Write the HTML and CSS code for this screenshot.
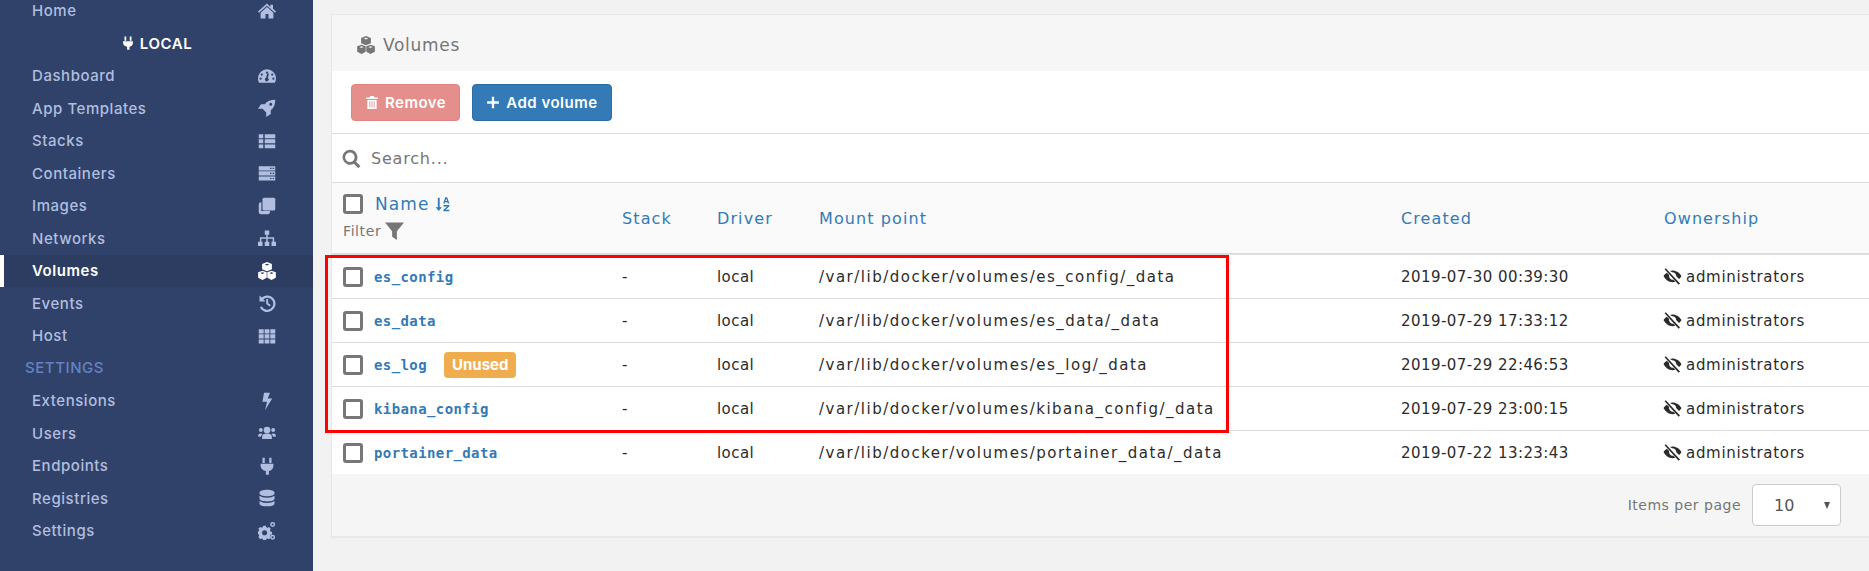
FILE: index.html
```html
<!DOCTYPE html>
<html lang="en">
<head>
  <meta charset="UTF-8">
  <title>Volumes</title>
  <link rel="stylesheet" href="styles.css">
</head>
<body>
  <svg class="sprites" width="0" height="0">
    <symbol id="i-home" viewBox="0 0 24 24"><path d="M12 2 0 12.6l1.4 1.7L12 5l10.600 9.300 1.400-1.700-4-3.500V3.500h-3.500v3.100z"/><path d="M3.500 14.200V22H10v-6h4v6h6.500v-7.800L12 6.800z"/></symbol>
    <symbol id="i-dash" viewBox="0 0 24 24"><path fill-rule="evenodd" d="M12 3A12 12 0 0 0 0 15c0 2.200.6 4.300 1.600 6h20.800c1-1.700 1.600-3.800 1.600-6A12 12 0 0 0 12 3zM5 8.500a1.500 1.500 0 1 1 0 3 1.500 1.500 0 0 1 0-3zM12 6a1.500 1.500 0 1 1 0 3 1.500 1.500 0 0 1 0-3zM3.500 14a1.500 1.500 0 1 1 0 3 1.500 1.500 0 0 1 0-3zM20.500 14a1.500 1.500 0 1 1 0 3 1.500 1.500 0 0 1 0-3zM19 8.500a1.500 1.500 0 1 1 0 3 1.500 1.500 0 0 1 0-3zM14.500 8.500l-1.200 6.100a2.500 2.500 0 1 1-2.500-.3l1.600-6.200z"/></symbol>
    <symbol id="i-rocket" viewBox="0 0 24 24"><path fill-rule="evenodd" d="M23 1c-6 0-10.500 1.500-14 6H4L0 13h6l5 5v6l6-4v-5c4.500-3.500 6-8 6-14zM17 5a2 2 0 1 1 0 4 2 2 0 0 1 0-4z"/></symbol>
    <symbol id="i-list" viewBox="0 0 24 24"><path d="M1 3h6v5.300H1zM9 3h14v5.300H9zM1 9.800h6v5.300H1zM9 9.800h14v5.300H9zM1 16.500h6v5.300H1zM9 16.500h14v5.300H9z"/></symbol>
    <symbol id="i-server" viewBox="0 0 24 24"><path fill-rule="evenodd" d="M1 3h22v5.500H1zM16 5v1.500h2V5zM19.500 5v1.500h2V5zM1 9.800h22v5.400H1zM16 11.700v1.500h2v-1.500zM19.500 11.700v1.500h2v-1.500zM1 16.500h22V22H1zM16 18.500V20h2v-1.500zM19.500 18.500V20h2v-1.500z"/></symbol>
    <symbol id="i-clone" viewBox="0 0 24 24"><path d="M8 1h13a2 2 0 0 1 2 2v13a2 2 0 0 1-2 2H8a2 2 0 0 1-2-2V3a2 2 0 0 1 2-2z"/><path d="M4.500 7v11.500H16V20a3 3 0 0 1-3 3H4a3 3 0 0 1-3-3v-10a3 3 0 0 1 3-3z"/></symbol>
    <symbol id="i-sitemap" viewBox="0 0 24 24"><path d="M9 2h6v5.500h-6zM0 17h6v5.500H0zM9 17h6v5.500H9zM18 17h6v5.500h-6zM11 7.500h2V11h8.500v6h-2v-4H13v4h-2v-4H4.500v4h-2v-6H11z"/></symbol>
    <symbol id="i-cubes" viewBox="0 0 24 24"><path fill-rule="evenodd" d="M12 0l6.500 2.500v7L12 12.300 5.500 9.500v-7zM12 2.200 9 3.300l3 1.300 3-1.300zM6 11.500l5.600 2.300v7.200L6 24 .2 21v-7.200zM6 13.800l-2.700 1L6 16l2.700-1.200zM18 11.500l5.800 2.300v7.200L18 24l-5.600-3v-7.200zM18 13.800l-2.700 1L18 16l2.700-1.200z"/></symbol>
    <symbol id="i-history" viewBox="0 0 24 24"><path d="M2 2v8h8L7 7a8 8 0 1 1-1.800 9.500l-2.800 1.200A11 11 0 1 0 5 4.800z"/><path d="M11 6.500h2.500v5.500l3.500 2.600-1.500 2-4.500-3.400z"/></symbol>
    <symbol id="i-grid" viewBox="0 0 24 24"><path d="M1 3h6.600v5.500H1zM8.800 3h6.400v5.500H8.800zM16.400 3H23v5.500h-6.600zM1 9.800h6.600v5.400H1zM8.800 9.800h6.400v5.400H8.800zM16.400 9.800H23v5.400h-6.600zM1 16.500h6.600V22H1zM8.800 16.500h6.400V22H8.800zM16.400 16.500H23V22h-6.600z"/></symbol>
    <symbol id="i-bolt" viewBox="0 0 24 24"><path d="M8 1h8l-3 7.500h6L9.500 24l2.500-11H6z"/></symbol>
    <symbol id="i-users" viewBox="0 0 24 24"><circle cx="12" cy="8" r="4.500"/><circle cx="3.800" cy="8" r="2.600"/><circle cx="20.200" cy="8" r="2.600"/><path d="M5.500 20v-3c0-2.500 2-4 4-4h5c2 0 4 1.500 4 4v3zM0 16.500c0-2.500 1.500-4 3.500-4 1 0 2 .4 2.700 1-1.400 1-2.200 2-2.400 3.500zM24 16.500c0-2.500-1.500-4-3.500-4-1 0-2 .4-2.700 1 1.400 1 2.200 2 2.400 3.500z"/></symbol>
    <symbol id="i-plug" viewBox="0 0 24 24"><path d="M6 1h3v7H6zM15 1h3v7h-3zM3.500 9h17v2.500c0 3.800-2.500 6.400-6 7v5H10.500v-5c-3.500-.6-7-3.200-7-7z"/></symbol>
    <symbol id="i-db" viewBox="0 0 24 24"><path d="M12 1c5.500 0 10 1.600 10 3.700v1.300c0 2-4.500 3.700-10 3.700S2 8 2 6V4.700C2 2.600 6.500 1 12 1zM2 9c2 1.800 6 2.600 10 2.600S20 10.800 22 9v4c0 2-4.500 3.500-10 3.500S2 15 2 13zM2 16c2 1.800 6 2.600 10 2.600s8-.8 10-2.600v3.500C22 21.500 17.500 23 12 23S2 21.500 2 19.500z"/></symbol>
    <symbol id="i-cogs" viewBox="0 0 24 24"><path fill-rule="evenodd" d="M7 5h3.500l.5 2 1.800.8 1.800-1.100 2.400 2.400-1.100 1.800.8 1.800 2 .5v3.400l-2 .5-.8 1.800 1.100 1.800-2.400 2.400-1.800-1.100-1.800.8-.5 2H7l-.5-2-1.800-.8-1.800 1.100L.5 20l1.100-1.800L.8 16.400 0 16v-3.400l.8-.2.8-1.800L.5 8.800l2.400-2.300 1.800 1.100 1.800-.8zM8.800 11a3.400 3.400 0 1 0 0 6.800 3.400 3.400 0 0 0 0-6.800z"/><path fill-rule="evenodd" d="M19.500 0a3.300 3.300 0 1 1 0 6.600 3.300 3.300 0 0 1 0-6.600zm0 1.900a1.400 1.400 0 1 0 0 2.800 1.400 1.400 0 0 0 0-2.800zM19.500 17a3.300 3.300 0 1 1 0 6.600 3.300 3.300 0 0 1 0-6.600zm0 1.900a1.400 1.400 0 1 0 0 2.800 1.400 1.400 0 0 0 0-2.800z"/></symbol>
    <symbol id="i-trash" viewBox="0 0 24 24"><path fill-rule="evenodd" d="M9 1h6l1 2.500h6V6H2V3.500h6zM4 7.500h16V23H4zM7.500 10v10.500H9V10zM11.300 10v10.500h1.500V10zM15 10v10.500h1.500V10z"/></symbol>
    <symbol id="i-plus" viewBox="0 0 24 24"><path d="M10 2h4v8h8v4h-8v8h-4v-8H2v-4h8z"/></symbol>
    <symbol id="i-search" viewBox="0 0 24 24"><path fill-rule="evenodd" d="M10 1a9.500 9.500 0 0 1 7.700 15l5.600 5.600-2.700 2.700-5.600-5.600A9.500 9.500 0 1 1 10 1zm0 3.500a6 6 0 1 0 0 12 6 6 0 0 0 0-12z"/></symbol>
    <symbol id="i-filter" viewBox="0 0 24 24"><path d="M0 2h24l-9 11v11l-6-4v-7z"/></symbol>
    <symbol id="i-sort" viewBox="0 0 24 24"><path d="M4.500 2h3v15h3.500l-5 6-5-6h3.500zM16.500 1h3l3.500 10h-2.600l-.6-2h-3.700l-.6 2h-2.500zM18 3.500 16.700 7.300h2.600zM13.500 13.500H23v2l-6 5.500h6v2.500h-9.700v-2l6-5.500h-5.800z"/></symbol>
    <symbol id="i-eyeoff" viewBox="0 0 24 24"><path fill-rule="evenodd" d="M3 1.500 22 22l-1.800 1.500L1.500 3zM4.500 7.500l3 3.300a5 5 0 0 0 5.700 6.200l2.600 2.800C9 21.500 3 18 0 12c1-1.800 2.500-3.300 4.500-4.500zM12 4.500c5 0 9.500 3 12 7.500-.8 1.500-2 3-3.300 4L16.900 12a5 5 0 0 0-5.500-5L8.800 5.200c1-.4 2-.7 3.200-.7z"/></symbol>
  </svg>

  <div class="page">
    <nav class="sidebar">
      <a class="nav-item"><span>Home</span><svg class="nav-icon"><use href="#i-home"/></svg></a>
      <div class="nav-endpoint"><svg class="endpoint-icon"><use href="#i-plug"/></svg> LOCAL</div>
      <a class="nav-item"><span>Dashboard</span><svg class="nav-icon"><use href="#i-dash"/></svg></a>
      <a class="nav-item"><span>App Templates</span><svg class="nav-icon"><use href="#i-rocket"/></svg></a>
      <a class="nav-item"><span>Stacks</span><svg class="nav-icon"><use href="#i-list"/></svg></a>
      <a class="nav-item"><span>Containers</span><svg class="nav-icon"><use href="#i-server"/></svg></a>
      <a class="nav-item"><span>Images</span><svg class="nav-icon"><use href="#i-clone"/></svg></a>
      <a class="nav-item"><span>Networks</span><svg class="nav-icon"><use href="#i-sitemap"/></svg></a>
      <a class="nav-item active"><span>Volumes</span><svg class="nav-icon"><use href="#i-cubes"/></svg></a>
      <a class="nav-item"><span>Events</span><svg class="nav-icon"><use href="#i-history"/></svg></a>
      <a class="nav-item"><span>Host</span><svg class="nav-icon"><use href="#i-grid"/></svg></a>
      <div class="nav-title">SETTINGS</div>
      <a class="nav-item"><span>Extensions</span><svg class="nav-icon"><use href="#i-bolt"/></svg></a>
      <a class="nav-item"><span>Users</span><svg class="nav-icon"><use href="#i-users"/></svg></a>
      <a class="nav-item"><span>Endpoints</span><svg class="nav-icon"><use href="#i-plug"/></svg></a>
      <a class="nav-item"><span>Registries</span><svg class="nav-icon"><use href="#i-db"/></svg></a>
      <a class="nav-item"><span>Settings</span><svg class="nav-icon"><use href="#i-cogs"/></svg></a>
    </nav>

    <main class="content">
      <section class="widget">
        <header class="widget-title"><svg class="title-icon"><use href="#i-cubes"/></svg>Volumes</header>

        <div class="toolbar">
          <button class="btn btn-remove"><svg class="btn-icon"><use href="#i-trash"/></svg>Remove</button>
          <button class="btn btn-add"><svg class="btn-icon"><use href="#i-plus"/></svg>Add volume</button>
        </div>

        <div class="searchbar">
          <svg class="search-icon"><use href="#i-search"/></svg>
          <input class="search-input" placeholder="Search...">
        </div>

        <table class="volumes">
          <thead>
            <tr>
              <th class="col-name">
                <div class="name-head"><input type="checkbox" class="check"><a>Name</a><svg class="sort-icon"><use href="#i-sort"/></svg></div>
                <div class="filter">Filter <svg class="filter-icon"><use href="#i-filter"/></svg></div>
              </th>
              <th class="col-stack"><a>Stack</a></th>
              <th class="col-driver"><a>Driver</a></th>
              <th class="col-mount"><a>Mount point</a></th>
              <th class="col-created"><a>Created</a></th>
              <th><a>Ownership</a></th>
            </tr>
          </thead>
          <tbody>
            <tr>
              <td><div class="vol-name"><input type="checkbox" class="check"><a class="vol-link">es_config</a></div></td>
              <td>-</td><td>local</td><td class="path">/var/lib/docker/volumes/es_config/_data</td><td>2019-07-30 00:39:30</td>
              <td class="owner"><svg class="owner-icon"><use href="#i-eyeoff"/></svg>administrators</td>
            </tr>
            <tr>
              <td><div class="vol-name"><input type="checkbox" class="check"><a class="vol-link">es_data</a></div></td>
              <td>-</td><td>local</td><td class="path">/var/lib/docker/volumes/es_data/_data</td><td>2019-07-29 17:33:12</td>
              <td class="owner"><svg class="owner-icon"><use href="#i-eyeoff"/></svg>administrators</td>
            </tr>
            <tr>
              <td><div class="vol-name"><input type="checkbox" class="check"><a class="vol-link">es_log</a><span class="badge">Unused</span></div></td>
              <td>-</td><td>local</td><td class="path">/var/lib/docker/volumes/es_log/_data</td><td>2019-07-29 22:46:53</td>
              <td class="owner"><svg class="owner-icon"><use href="#i-eyeoff"/></svg>administrators</td>
            </tr>
            <tr>
              <td><div class="vol-name"><input type="checkbox" class="check"><a class="vol-link">kibana_config</a></div></td>
              <td>-</td><td>local</td><td class="path">/var/lib/docker/volumes/kibana_config/_data</td><td>2019-07-29 23:00:15</td>
              <td class="owner"><svg class="owner-icon"><use href="#i-eyeoff"/></svg>administrators</td>
            </tr>
            <tr>
              <td><div class="vol-name"><input type="checkbox" class="check"><a class="vol-link">portainer_data</a></div></td>
              <td>-</td><td>local</td><td class="path">/var/lib/docker/volumes/portainer_data/_data</td><td>2019-07-22 13:23:43</td>
              <td class="owner"><svg class="owner-icon"><use href="#i-eyeoff"/></svg>administrators</td>
            </tr>
          </tbody>
        </table>

        <footer class="pager">
          <span>Items per page</span>
          <div class="page-select">10<span class="caret"></span></div>
        </footer>
      </section>
    </main>
  </div>

  <div class="highlight"></div>
</body>
</html>
```

FILE: styles.css
```css
* {
  box-sizing: border-box;
}
html, body {
  height: 100%;
}
body {
  margin: 0;
  overflow: hidden;
  background: #f2f2f2;
  font-family: "DejaVu Sans", Inter, sans-serif;
  font-size: 15px;
  color: #2b2b2b;
}
.sprites {
  display: block;
  height: 0;
}
.page {
  display: flex;
  height: 571px;
}

/* sidebar */
.sidebar {
  flex: 0 0 313px;
  background: #30426a;
  overflow: hidden;
  color: #b1bedf;
  font-family: Inter, sans-serif;
  font-weight: 500;
  font-size: 15px;
  letter-spacing: 0.55px;
}
.nav-item {
  display: flex;
  justify-content: space-between;
  align-items: center;
  height: 32.5px;
  padding: 0 37px 0 32px;
}
.nav-item:first-child {
  height: 27px;
  align-items: flex-end;
  padding-bottom: 7px;
}
.nav-item.active {
  background: #2d3d61;
  border-left: 4px solid #fff;
  padding-left: 28px;
  color: #fff;
  font-weight: 600;
}
.nav-icon {
  width: 18px;
  height: 18px;
  fill: currentColor;
}
.nav-endpoint {
  display: flex;
  justify-content: center;
  align-items: center;
  gap: 5px;
  height: 32.5px;
  color: #fff;
  font-weight: 600;
}
.endpoint-icon {
  width: 14px;
  height: 16px;
  fill: currentColor;
}
.nav-title {
  height: 32.5px;
  line-height: 32.5px;
  padding-left: 25px;
  color: #6583c0;
}

/* main */
.content {
  flex: 1;
  min-width: 0;
  padding: 14px 0 0 18px;
  overflow: hidden;
}
.widget {
  width: 1540px;
  background: #fff;
  border: 1px solid #e8e8e8;
  border-right: 0;
}
.widget-title {
  display: flex;
  align-items: center;
  height: 56px;
  padding: 4px 0 0 25px;
  background: #f6f6f6;
  font-size: 17px;
  letter-spacing: 0.7px;
  color: #767676;
}
.title-icon {
  width: 18px;
  height: 18px;
  margin-right: 8px;
  fill: currentColor;
}
.toolbar {
  display: flex;
  gap: 12px;
  height: 63px;
  padding: 13px 0 0 19px;
  border-bottom: 1px solid #ddd;
}
.btn {
  display: flex;
  align-items: center;
  height: 37px;
  padding: 0 13px;
  border: 1px solid;
  border-radius: 4px;
  color: #fff;
  font: 600 15px Inter, sans-serif;
  letter-spacing: 0.5px;
}
.btn-remove {
  background: #e58f8c;
  border-color: #e28480;
}
.btn-add {
  background: #337ab7;
  border-color: #2e6da4;
}
.btn-icon {
  width: 14px;
  height: 15px;
  margin-right: 6px;
  fill: #fff;
}
.searchbar {
  display: flex;
  align-items: center;
  height: 49px;
  padding-left: 10px;
  border-bottom: 1px solid #ddd;
}
.search-icon {
  width: 19px;
  height: 19px;
  margin-right: 10px;
  fill: #777;
}
.search-input {
  flex: 1;
  border: 0;
  outline: 0;
  padding: 0;
  font: 400 16px "DejaVu Sans", sans-serif;
  letter-spacing: 0.8px;
  background: transparent;
}
.search-input::placeholder {
  color: #767676;
  opacity: 1;
}

/* table */
.volumes {
  width: 100%;
  table-layout: fixed;
  border-collapse: collapse;
  letter-spacing: 0.45px;
}
.volumes th {
  height: 71px;
  padding: 0 8px;
  background: #fafafa;
  border-bottom: 2px solid #ddd;
  text-align: left;
  font-weight: 400;
  font-size: 16px;
  letter-spacing: 1.1px;
  color: #337ab7;
}
.volumes td {
  height: 44px;
  padding: 1px 8px 0;
  border-bottom: 1px solid #ddd;
  color: #2b2b2b;
}
.volumes tr:last-child td {
  border-bottom: 0;
}
.volumes td.path {
  letter-spacing: 1.5px;
}
.volumes td.owner {
  letter-spacing: 0.7px;
}
.col-name { width: 282px; }
.col-stack { width: 95px; }
.col-driver { width: 102px; }
.col-mount { width: 582px; }
.col-created { width: 263px; }

.check {
  appearance: none;
  flex: none;
  width: 20px;
  height: 20px;
  margin: 0;
  background: #fff;
  border: 3px solid #777;
  border-radius: 3px;
}
.volumes th:first-child,
.volumes td:first-child {
  padding-left: 11px;
}
.name-head {
  display: flex;
  align-items: center;
  margin-top: -2px;
  font-size: 17px;
}
.name-head a {
  margin-left: 12px;
}
.sort-icon {
  width: 15px;
  height: 18px;
  margin-left: 5px;
  fill: currentColor;
}
.filter {
  display: flex;
  align-items: center;
  gap: 4px;
  margin-top: 7px;
  font-size: 14px;
  letter-spacing: 0.6px;
  color: #767676;
}
.filter-icon {
  width: 19px;
  height: 19px;
  fill: currentColor;
}
.vol-name {
  display: flex;
  align-items: center;
}
.vol-link {
  margin-left: 11px;
  font: 700 14px "DejaVu Sans Mono", monospace;
  letter-spacing: 0.4px;
  color: #337ab7;
}
.badge {
  margin-left: 17px;
  padding: 0 8px;
  height: 26px;
  background: #f0ad4e;
  border-radius: 4px;
  color: #fff;
  font: 700 15px/26px Inter, sans-serif;
  letter-spacing: 0;
}
.owner-icon {
  width: 19px;
  height: 18px;
  margin: 0 4px 0 -1px;
  vertical-align: -3px;
  fill: #2b2b2b;
}

/* footer */
.pager {
  display: flex;
  justify-content: flex-end;
  align-items: center;
  gap: 11px;
  height: 63px;
  padding-right: 30px;
  background: #f5f5f5;
  border-bottom: 1px solid #e8e8e8;
  font-size: 14px;
  letter-spacing: 0.5px;
  color: #767676;
}
.page-select {
  display: flex;
  align-items: center;
  justify-content: space-between;
  width: 89px;
  height: 42px;
  padding: 0 10px 0 21px;
  background: #fff;
  border: 1px solid #ccc;
  border-radius: 4px;
  font-size: 16px;
  letter-spacing: 0;
  color: #555;
}
.caret {
  width: 0;
  height: 0;
  border-left: 3.500px solid transparent;
  border-right: 3.500px solid transparent;
  border-top: 7px solid #555;
}

/* red annotation drawn over the screenshot */
.highlight {
  position: absolute;
  left: 325px;
  top: 255px;
  width: 904px;
  height: 178px;
  border: 3px solid #f00;
  pointer-events: none;
}
```
